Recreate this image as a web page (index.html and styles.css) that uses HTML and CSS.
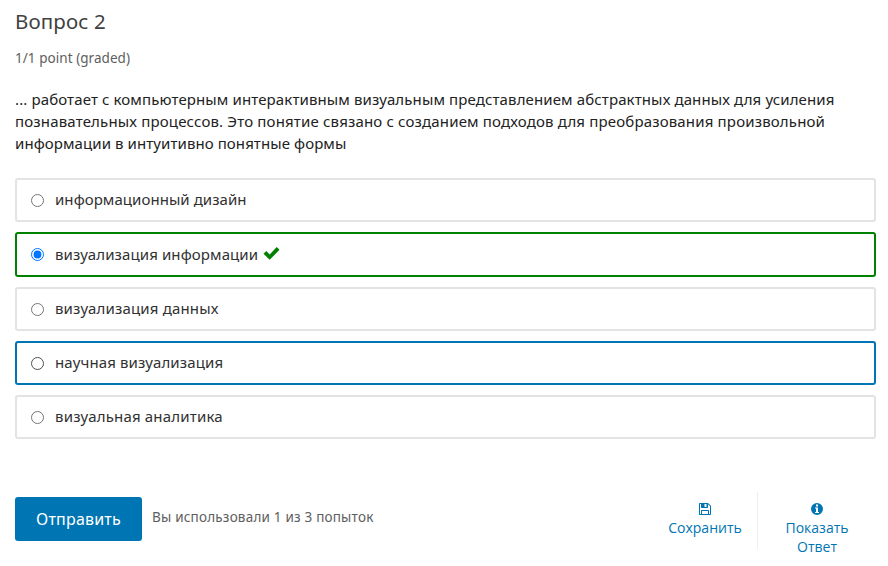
FILE: index.html
```html
<!DOCTYPE html>
<html lang="ru">
<head>
<meta charset="utf-8">
<title>Вопрос 2</title>
<link rel="stylesheet" href="styles.css">
</head>
<body>
<main class="problem">
  <h3 class="title">Вопрос 2</h3>
  <div class="progress">1/1 point (graded)</div>
  <p class="question"><span class="line first">... работает с компьютерным интерактивным визуальным представлением абстрактных данных для усиления</span> <span class="line second">познавательных процессов. Это понятие связано с созданием подходов для преобразования произвольной</span> <span class="line third">информации в интуитивно понятные формы</span></p>
  <div class="choices">
    <label class="choice design"><input type="radio" name="answer"><span>информационный дизайн</span></label>
    <label class="choice correct"><input type="radio" name="answer" checked><span>визуализация информации</span>
      <svg class="check" viewBox="0 0 16 13"><path d="M0 6.800 2.800 4l3.400 3.400L13.200 0 16 2.800 6.200 12.800z"/></svg></label>
    <label class="choice data"><input type="radio" name="answer"><span>визуализация данных</span></label>
    <label class="choice active"><input type="radio" name="answer"><span>научная визуализация</span></label>
    <label class="choice analytics"><input type="radio" name="answer"><span>визуальная аналитика</span></label>
  </div>
  <div class="actions">
    <button class="submit" type="button">Отправить</button>
    <div class="attempts">Вы использовали 1 из 3 попыток</div>
    <div class="tools">
      <button class="tool save" type="button">
        <svg class="icon" viewBox="0 0 12 12"><path fill-rule="evenodd" d="M0 .7Q0 0 .7 0H8.700Q9.200 0 9.600.4L11.600 2.400Q12 2.800 12 3.300V11.300Q12 12 11.300 12H.7Q0 12 0 11.300ZM1 1V11H2V7.700Q2 7 2.700 7H9.300Q10 7 10 7.700V11H11V3.300L9 1.300V4.300Q9 5 8.300 5H2.700Q2 5 2 4.300V1ZM5.500 1V4H7.500V1ZM3 8V11H9V8Z"/></svg>
        <span>Сохранить</span>
      </button>
      <button class="tool show" type="button">
        <svg class="icon" viewBox="0 0 12 12"><path fill-rule="evenodd" d="M6 0A6 6 0 1 1 6 12 6 6 0 0 1 6 0ZM5 1.500V3.500H7V1.500ZM4 4.500V5.500H5V9H4V10H8V9H7V4.500Z"/></svg>
        <span>Показать<br>Ответ</span>
      </button>
    </div>
  </div>
</main>
</body>
</html>
```

FILE: styles.css
```css
* { box-sizing: border-box; }
body { margin: 0; background: #fff; color: #222; font-family: "Noto Sans", sans-serif; font-size: 15px; }
.problem { padding: 8px 12px 0 15px; }
.title { margin: 0; font-size: 20.5px; line-height: 27px; font-weight: 400; color: #414141; letter-spacing: .13px; }
.progress { margin-top: 14px; font-size: 13.5px; line-height: 18px; color: #5e5e5e; letter-spacing: .05px; }
.question { margin: 21px 0 0; line-height: 22px; }
.line { display: block; white-space: nowrap; }
.first { letter-spacing: .12px; }
.second { letter-spacing: .163px; }
.third { letter-spacing: .08px; }
.choices { display: flex; flex-direction: column; gap: 10px; margin-top: 24px; }
.choice { display: flex; align-items: center; height: 44px; padding: 0 14px; border: 2px solid #e3e3e3; border-radius: 3px; color: #313131; white-space: nowrap; }
.choice input { width: 13px; height: 13px; margin: 0 11px 0 0; }
.choice span { margin-bottom: 2px; }
.design { letter-spacing: .05px; }
.correct { height: 45px; border-color: #008100; letter-spacing: .1px; }
.data { letter-spacing: .16px; }
.active { border-color: #0075b4; letter-spacing: .13px; }
.active input { appearance: none; border: 1px solid #4f4f4f; border-radius: 50%; }
.analytics { letter-spacing: .18px; }
.check { width: 17px; height: 13px; margin: -2px 0 0 5px; fill: #008100; }
.actions { display: flex; align-items: flex-start; margin-top: 53px; }
button { margin: 0; padding: 0; border: 0; background: none; font-family: "Open Sans", sans-serif; }
.submit { width: 127px; height: 44px; margin-top: 5px; border-radius: 3px; background: #0075b4; color: #fff; font-family: "Noto Sans", sans-serif; font-size: 16px; letter-spacing: .2px; }
.attempts { margin: 16px 0 0 10px; font-size: 13.5px; line-height: 18px; color: #5e5e5e; letter-spacing: .2px; white-space: nowrap; }
.tools { display: flex; margin-left: auto; }
.tool { display: flex; flex-direction: column; align-items: center; padding-top: 11px; color: #0075b4; font-size: 14px; line-height: 19px; }
.save { width: 105px; height: 57px; border-right: 1px solid #eee; }
.show { width: 118px; }
.icon { width: 12px; height: 12px; margin-bottom: 3px; fill: currentColor; }
```
